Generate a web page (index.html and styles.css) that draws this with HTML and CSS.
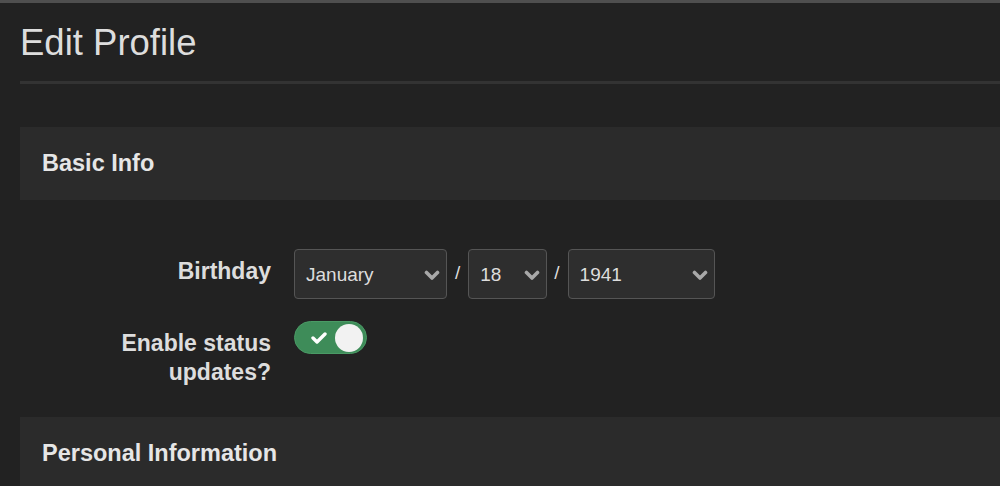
FILE: index.html
```html
<!DOCTYPE html>
<html lang="en">
<head>
    <meta charset="UTF-8">
    <meta name="viewport" content="width=device-width, initial-scale=1.0">
    <title>Edit Profile</title>
    <link rel="stylesheet" href="styles.css">
</head>
<body>
    <div class="page">
        <h1 class="page-title">Edit Profile</h1>
        <hr class="divider">

        <section class="panel">
            <h2 class="panel-title">Basic Info</h2>
        </section>

        <form class="profile-form">
            <div class="form-row">
                <label class="form-label" for="month">Birthday</label>
                <div class="date-group">
                    <div class="select select-month">
                        <span id="month">January</span>
                        <svg class="chevron" viewBox="0 0 16 11" width="16" height="11"><path d="M2.5 2.5 L8 8 L13.5 2.5" fill="none" stroke="currentColor" stroke-width="3.6" stroke-linecap="round" stroke-linejoin="round"/></svg>
                    </div>
                    <span class="date-sep">/</span>
                    <div class="select select-day">
                        <span>18</span>
                        <svg class="chevron" viewBox="0 0 16 11" width="16" height="11"><path d="M2.5 2.5 L8 8 L13.5 2.5" fill="none" stroke="currentColor" stroke-width="3.6" stroke-linecap="round" stroke-linejoin="round"/></svg>
                    </div>
                    <span class="date-sep">/</span>
                    <div class="select select-year">
                        <span>1941</span>
                        <svg class="chevron" viewBox="0 0 16 11" width="16" height="11"><path d="M2.5 2.5 L8 8 L13.5 2.5" fill="none" stroke="currentColor" stroke-width="3.6" stroke-linecap="round" stroke-linejoin="round"/></svg>
                    </div>
                </div>
            </div>

            <div class="form-row">
                <label class="form-label">Enable status updates?</label>
                <div class="toggle on">
                    <svg class="toggle-check" viewBox="0 0 16 12" width="16" height="12"><path d="M2 6 L6 10 L14 2" fill="none" stroke="#fff" stroke-width="3.4" stroke-linecap="round" stroke-linejoin="round"/></svg>
                    <span class="toggle-knob"></span>
                </div>
            </div>
        </form>

        <section class="panel panel-next">
            <h2 class="panel-title">Personal Information</h2>
        </section>
    </div>
</body>
</html>
```

FILE: styles.css
```css
body {
    font-family: "Liberation Sans", Arial, sans-serif;
    margin: 0;
    background-color: #222;
    border-top: 3px solid #4f4f4f;
    color: #ddd;
    overflow: hidden;
}
.page {
    padding-left: 20px;
}
.page-title {
    font-size: 36.5px;
    font-weight: normal;
    color: #ddd;
    margin: 0;
    padding-top: 20px;
    line-height: 40px;
}
.divider {
    border: none;
    height: 3px;
    background-color: #333;
    margin: 18px 0 0 0;
}
.panel {
    background-color: #2b2b2b;
    margin-top: 43px;
    height: 73px;
    display: flex;
    align-items: center;
    padding-left: 22px;
}
.panel-next {
    margin-top: 30px;
}
.panel-title {
    margin: 0;
    font-size: 23.5px;
    color: #e6e6e6;
}
.profile-form {
    padding-top: 49px;
    display: flex;
    flex-direction: column;
    gap: 22px;
}
.form-row {
    display: grid;
    grid-template-columns: 251px auto;
    column-gap: 23px;
    align-items: start;
}
.form-label {
    text-align: right;
    font-weight: bold;
    font-size: 23px;
    line-height: 29px;
    color: #ddd;
    padding-top: 8px;
}
.date-group {
    display: flex;
    align-items: center;
}
.select {
    height: 50px;
    box-sizing: border-box;
    border: 1px solid #555;
    border-radius: 4px;
    background-color: #2e2e2e;
    display: flex;
    align-items: center;
    justify-content: space-between;
    padding: 2px 6px 0 11px;
    font-size: 19px;
    color: #ddd;
}
.select-month { width: 153px; }
.select-day { width: 79px; }
.select-year { width: 147px; }
.chevron {
    color: #a8a8a8;
}
.date-sep {
    font-size: 19px;
    color: #ddd;
    margin: -3px 8px 0 8px;
}
.select-day + .date-sep {
    margin-left: 7px;
    margin-right: 8px;
}
.toggle {
    width: 73px;
    height: 33px;
    box-sizing: border-box;
    border-radius: 17px;
    background-color: #3e8c59;
    border: 1px solid #4a9a65;
    display: flex;
    align-items: center;
    justify-content: space-between;
    padding: 0 3px 0 16px;
}
.toggle-knob {
    width: 28px;
    height: 28px;
    border-radius: 50%;
    background-color: #f2f2f2;
}
```
